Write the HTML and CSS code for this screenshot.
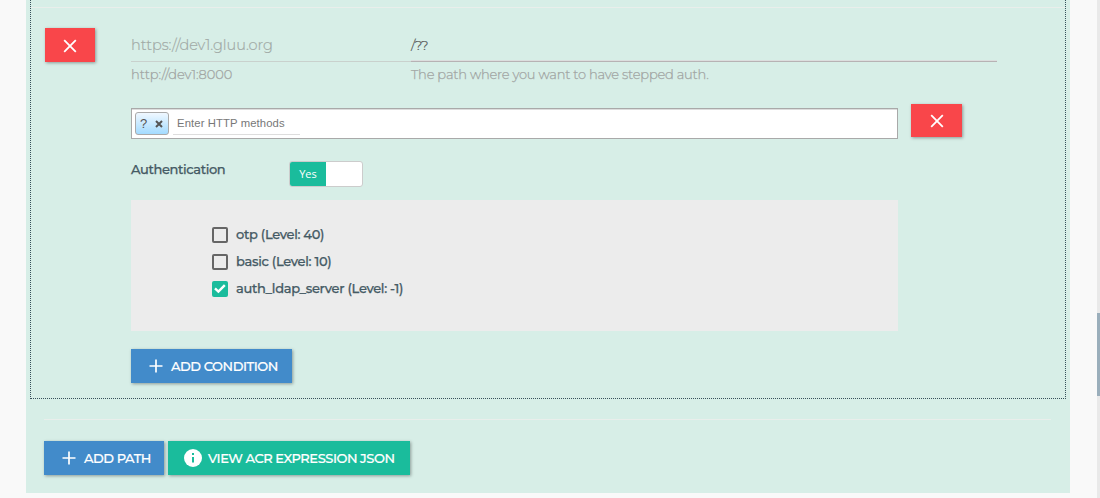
FILE: index.html
```html
<!DOCTYPE html>
<html lang="en">
<head>
<meta charset="utf-8">
<title>Stepped authentication</title>
<link rel="stylesheet" href="styles.css">
</head>
<body>
<main class="panel">
  <section class="path-box">
    <div class="divider"></div>
    <div class="path-body">
      <button class="btn btn-danger"><svg class="icon-x" viewBox="0 0 14 14"><path d="M1.2 1.2 12.8 12.8M12.8 1.2 1.2 12.8"/></svg></button>
      <div class="content">
        <div class="fields">
          <div class="field host"><div class="value"><span class="host-text">https://dev1.gluu.org</span></div><div class="hint"><span class="hint-host">http://dev1:8000</span></div></div>
          <div class="field path"><div class="value"><span class="path-text">/??</span></div><div class="hint"><span class="hint-path">The path where you want to have stepped auth.</span></div></div>
        </div>
        <div class="methods">
          <div class="tags">
            <span class="tag"><span>?</span><svg class="tag-x" viewBox="0 0 8 8"><path d="M1 1 7 7M7 1 1 7"/></svg></span>
            <span class="tag-input">Enter HTTP methods</span>
          </div>
          <button class="btn btn-danger btn-condition"><svg class="icon-x" viewBox="0 0 14 14"><path d="M1.2 1.2 12.8 12.8M12.8 1.2 1.2 12.8"/></svg></button>
        </div>
        <div class="auth-row">
          <span class="auth-label">Authentication</span>
          <div class="toggle"><span class="toggle-on">Yes</span></div>
        </div>
        <div class="levels">
          <div class="level"><span class="box"></span><span class="level-text">otp (Level: 40)</span></div>
          <div class="level"><span class="box"></span><span class="level-text">basic (Level: 10)</span></div>
          <div class="level"><span class="box checked"><svg viewBox="0 0 16 16"><path d="M3 7.4 6.4 10.6 12.8 4.2"/></svg></span><span class="level-text">auth_ldap_server (Level: -1)</span></div>
        </div>
        <button class="btn btn-primary add-condition"><svg class="icon-plus" viewBox="0 0 14 14"><path d="M7 .5V13.5M.5 7H13.5"/></svg><span>ADD CONDITION</span></button>
      </div>
    </div>
  </section>
  <div class="divider lower"></div>
  <div class="actions">
    <button class="btn btn-primary add-path"><svg class="icon-plus" viewBox="0 0 14 14"><path d="M7 .5V13.5M.5 7H13.5"/></svg><span>ADD PATH</span></button>
    <button class="btn btn-success"><svg class="icon-info" viewBox="0 0 18 18"><circle cx="9" cy="9" r="9"/><path d="M8 4h2v2H8zM8 8h2v5.5H8z"/></svg><span>VIEW ACR EXPRESSION JSON</span></button>
  </div>
</main>
<div class="scroll-track"><div class="scroll-thumb"></div></div>
</body>
</html>
```
FILE: styles.css
```css
* { box-sizing: border-box; }
body { margin: 0; height: 498px; overflow: hidden; display: flex; justify-content: space-between; background: #f9f9f9; font-family: Montserrat, Inter, sans-serif; font-size: 13px; color: #455a64; }
span { white-space: nowrap; }
.panel { width: 1044px; height: 493px; margin-left: 26px; padding: 0 4px; background: #d7eee7; }
.path-box { width: 1036px; height: 399px; border: 1px dotted #37505a; border-top: 0; padding-top: 7px; }
.divider { height: 1px; background: #e9eeeb; }
.path-body { display: flex; align-items: flex-start; padding: 20px 0 0 14px; }
.content { margin-left: 36px; width: 880px; }
.btn { display: flex; align-items: center; border: 0; border-radius: 0; padding: 0; height: 34px; color: #fff; font: 500 13px/18px Montserrat, Inter, sans-serif; letter-spacing: -.45px; box-shadow: 1px 1px 3px rgba(0, 0, 0, .35); -webkit-text-stroke: .2px; }
.btn-danger { width: 50px; justify-content: center; background: #f9464a; }
.btn-primary { background: #428bca; }
.btn-success { width: 242px; padding-left: 16px; gap: 6px; background: #1abc9c; }
svg { display: block; fill: none; stroke: currentColor; flex: none; }
.icon-x { width: 14px; height: 14px; stroke-width: 1.8; margin-top: 2px; }
.icon-plus { width: 14px; height: 14px; stroke-width: 1.7; }
.icon-info { width: 18px; height: 18px; stroke: none; fill: #fff; }
.icon-info path { fill: #1abc9c; }
.fields { display: flex; height: 80px; }
.host { width: 280px; color: #a1aaa6; }
.path { width: 586px; }
.value { height: 34px; padding-top: 7px; font-size: 14.5px; line-height: 20px; font-weight: 300; letter-spacing: -.04px; border-bottom: 1px solid #c9d1cd; -webkit-text-stroke: .2px; }
.path .value { font-size: 14px; letter-spacing: -1px; color: #555; border-bottom-color: #b7b2b4; box-shadow: inset 0 -1px #dcdede; }
.hint { padding-top: 3px; font-size: 13px; line-height: 18px; font-weight: 300; letter-spacing: -.2px; color: #a1a5a3; -webkit-text-stroke: .25px; }
.hint-host { letter-spacing: -.03px; }
.methods { display: flex; align-items: flex-start; height: 53px; }
.tags { width: 767px; height: 31px; display: flex; padding: 3px; border: 1px solid #a9a9a9; background: #fff; box-shadow: inset 0 1px #ddd; }
.tag { width: 34px; height: 23px; display: flex; align-items: center; justify-content: space-between; padding: 0 5px 0 4px; border: 1px solid #aaa; border-radius: 3px; background: linear-gradient(#f0f8ff, #a3dbff); font: 13px/20px "Liberation Sans", sans-serif; color: #555; }
.tag-x { width: 8px; height: 8px; stroke-width: 2; }
.tag-input { width: 127px; height: 23px; margin-left: 4px; padding-left: 4px; border-bottom: 1px solid #ddd; font: 11.3px/22px "Liberation Sans", sans-serif; letter-spacing: .1px; color: #777; }
.btn-condition { width: 51px; height: 33px; margin: -4px 0 0 13px; }
.btn-condition .icon-x { margin-top: 1px; }
.auth-row { height: 39px; display: flex; align-items: flex-start; }
.auth-label { width: 159px; margin-top: -1px; line-height: 18px; font-weight: 500; letter-spacing: -.38px; -webkit-text-stroke: .25px; }
.toggle { width: 74px; height: 26px; margin-left: -1px; border: 1px solid #ccc; border-radius: 3px; background: #fff; overflow: hidden; }
.toggle-on { display: block; width: 36px; height: 24px; background: #1abc9c; color: #fff; text-align: center; font: 11px/24px "Open Sans", sans-serif; }
.levels { width: 767px; height: 131px; padding: 21px 0 0 81px; background: #ececec; font-weight: 500; letter-spacing: -.3px; -webkit-text-stroke: .25px; }
.level { display: flex; align-items: center; height: 27px; gap: 8px; line-height: 18px; }
.level-text { padding-bottom: 2px; }
.box { width: 16px; height: 16px; border: 2px solid #666; border-radius: 2px; }
.box.checked { border: 0; background: #1abc9c; color: #fff; }
.box svg { width: 16px; height: 16px; stroke-width: 2.4; }
.add-condition { width: 161px; margin-top: 18px; padding-left: 18px; gap: 8px; }
.divider.lower { width: 1007px; margin: 20px 0 0 14px; }
.actions { display: flex; gap: 4px; margin: 21px 0 0 14px; }
.add-path { width: 120px; padding-left: 18px; gap: 8px; }
.scroll-track { width: 3px; height: 498px; padding-top: 313px; background: #e9e9e9; }
.scroll-thumb { height: 83px; background: #9aaebb; }
```
